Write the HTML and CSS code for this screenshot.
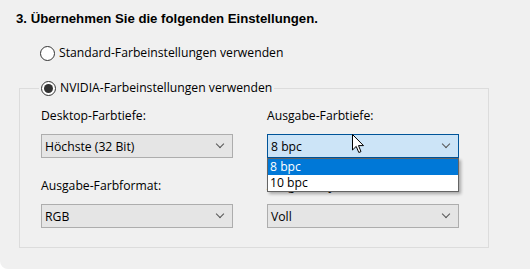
FILE: index.html
```html
<!DOCTYPE html>
<html lang="de">
<head>
    <meta charset="utf-8">
    <title>Farbeinstellungen</title>
    <link rel="stylesheet" href="styles.css">
</head>
<body>
    <div class="panel">
        <h2>3. Übernehmen Sie die folgenden Einstellungen.</h2>
        <label class="radio first">
            <input type="radio" name="mode">
            Standard-Farbeinstellungen verwenden
        </label>
        <fieldset class="group">
            <legend>
                <label class="radio">
                    <input type="radio" name="mode" checked>
                    NVIDIA-Farbeinstellungen verwenden
                </label>
            </legend>
            <div class="grid">
                <div class="field">
                    <span class="label">Desktop-Farbtiefe:</span>
                    <div class="select">Höchste (32 Bit)<span class="chevron"></span></div>
                </div>
                <div class="field">
                    <span class="label">Ausgabe-Farbtiefe:</span>
                    <div class="select open">8 bpc<span class="chevron"></span>
                        <ul class="menu">
                            <li class="active">8 bpc</li>
                            <li>10 bpc</li>
                        </ul>
                    </div>
                </div>
                <div class="field">
                    <span class="label">Ausgabe-Farbformat:</span>
                    <div class="select">RGB<span class="chevron"></span></div>
                </div>
                <div class="field">
                    <span class="label hidden">Ausgabe-Dynamikbereich:</span>
                    <div class="select">Voll<span class="chevron"></span></div>
                </div>
            </div>
        </fieldset>
    </div>
    <svg class="cursor" width="13" height="20" viewBox="0 0 13 20">
        <path d="M0.5 0.5 L0.5 16 L4.2 12.4 L6.8 18.5 L9 17.6 L6.5 11.6 L11.5 11.6 Z" fill="#fff" stroke="#000" stroke-width="1" stroke-linejoin="miter"/>
    </svg>
</body>
</html>
```

FILE: styles.css
```css
:root {
    box-sizing: border-box;
}
:root * {
    box-sizing: inherit;
}
body {
    background-color: #FFF;
    color: #000;
    font-family: "Open Sans", "Noto Sans", sans-serif;
    font-size: 12.2px;
    margin: 0;
    position: relative;
    width: 530px;
    height: 269px;
    overflow: hidden;
}
.panel {
    background-color: #F0F0F0;
    border-bottom-left-radius: 8px;
    height: 269px;
    padding: 11px 0 0;
}
h2 {
    font-family: "Liberation Sans", Arial, sans-serif;
    font-size: 13.2px;
    font-weight: 700;
    line-height: 16px;
    margin: 0 0 0 16px;
}
.radio {
    align-items: center;
    display: flex;
    gap: 4px;
    line-height: 16px;
}
.radio.first {
    margin: 18px 0 0 40px;
}
.radio input {
    appearance: none;
    background-color: #FFF;
    border: 1px solid #333;
    border-radius: 50%;
    height: 15px;
    margin: 0;
    position: relative;
    width: 15px;
}
.radio input:checked::after {
    background-color: #333;
    border-radius: 50%;
    content: "";
    height: 9px;
    left: 2px;
    position: absolute;
    top: 2px;
    width: 9px;
}
.group {
    border: 1px solid #DCDCDC;
    height: 168px;
    margin: 19px 0 0 19px;
    padding: 0;
    width: 470px;
}
.group legend {
    margin-left: 19px;
    padding: 0 2px 0 2px;
}
.grid {
    display: grid;
    grid-template-columns: 192px 192px;
    column-gap: 34px;
    row-gap: 20px;
    padding: 12px 0 0 21px;
}
.label {
    display: block;
    line-height: 16px;
    margin: 0 0 10px;
}
.select {
    align-items: center;
    background-color: #E5E5E5;
    border: 1px solid #ADADAD;
    display: flex;
    height: 24px;
    padding: 0 0 0 3px;
    position: relative;
}
.chevron {
    border-bottom: 1px solid #555;
    border-right: 1px solid #555;
    height: 6px;
    margin: -4px 9px 0 auto;
    transform: rotate(45deg);
    width: 6px;
}
.select.open {
    background-color: #CCE4F7;
    border-color: #005499;
}
.menu {
    background-color: #FFF;
    border: 1px solid #646464;
    box-shadow: 2px 2px 3px rgba(0, 0, 0, 0.3);
    left: -1px;
    list-style: none;
    margin: 0;
    padding: 0;
    position: absolute;
    right: -1px;
    top: 23px;
    z-index: 2;
}
.menu li {
    line-height: 16px;
    padding: 0 0 0 2px;
}
.menu .active {
    background-color: #0078D7;
    color: #FFF;
}
.cursor {
    left: 352px;
    position: absolute;
    top: 134px;
}
```
